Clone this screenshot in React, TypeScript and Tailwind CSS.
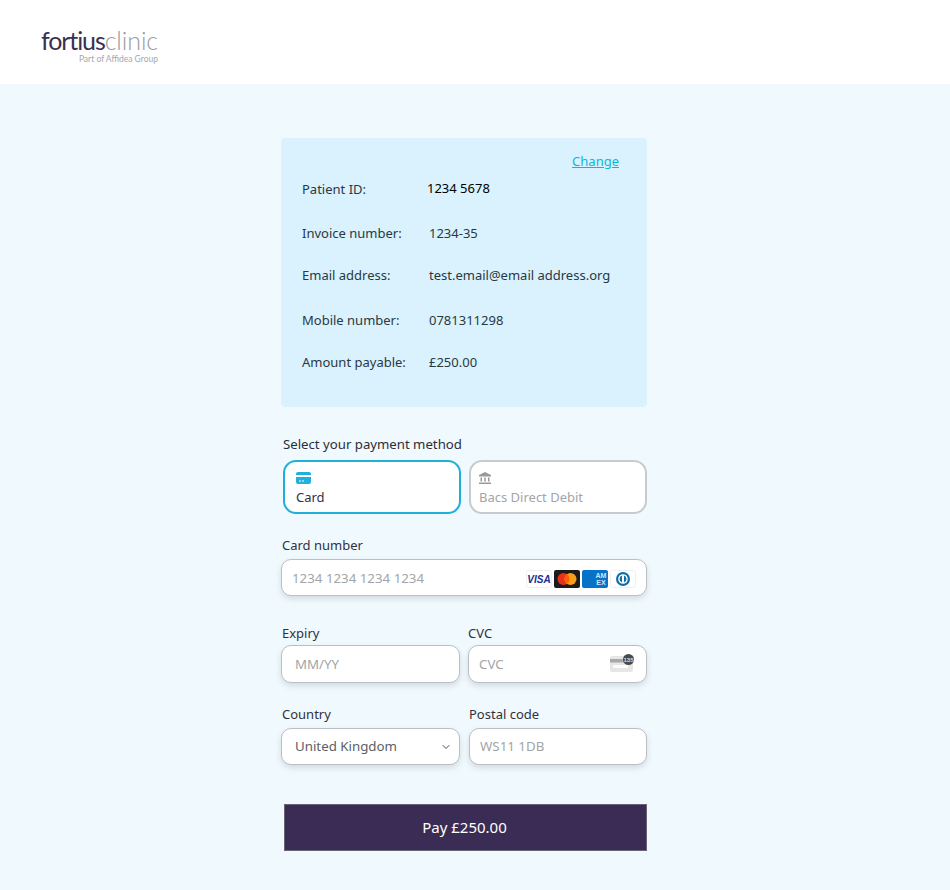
import React from 'react';
import { ChevronDown } from 'lucide-react';

const font = { fontFamily: '"Noto Sans", sans-serif' };

const rows = [
  { label: 'Patient ID:', value: '1234 5678', cls: 'h-[44px]', val: 'pl-[125px] -mt-[1px] text-black' },
  { label: 'Invoice number:', value: '1234-35', cls: 'h-[42px]', val: 'pl-[127px]' },
  { label: 'Email address:', value: 'test.email@email address.org', cls: 'h-[45px]', val: 'pl-[127px]' },
  { label: 'Mobile number:', value: '0781311298', cls: 'h-[42px]', val: 'pl-[127px]' },
  { label: 'Amount payable:', value: '£250.00', cls: 'h-[44px]', val: 'pl-[127px]' },
];

function CardIcon() {
  return (
    <svg width="15" height="12" viewBox="0 0 15 12">
      <path d="M2 0h11a2 2 0 0 1 2 2v1H0V2a2 2 0 0 1 2-2z" fill="#1fb0e0" />
      <path d="M0 5h15v5a2 2 0 0 1-2 2H2a2 2 0 0 1-2-2z" fill="#1fb0e0" />
      <path d="M3 9h2M6 9h2" stroke="#fff" strokeWidth="1" />
    </svg>
  );
}

function BankIcon() {
  return (
    <svg width="12" height="12" viewBox="0 0 12 12" fill="#9a9a9a">
      <path d="M6 0l6 3v1.500H0V3z" />
      <path d="M1.500 5.500h1.500v4H1.500zM5.250 5.500h1.500v4h-1.500zM9 5.500h1.500v4H9zM0 10.500h12V12H0z" />
    </svg>
  );
}

function Brands() {
  return (
    <div className="flex items-center gap-[2px]">
      <svg width="26" height="18" viewBox="0 0 26 18">
        <rect x="0.500" y="0.500" width="25" height="17" rx="2" fill="#fff" stroke="#eceff3" />
        <text x="13" y="12.700" textAnchor="middle" fontSize="10" fontWeight="700" fontStyle="italic" fill="#1a2f8f" fontFamily="Liberation Sans, sans-serif">VISA</text>
      </svg>
      <svg width="26" height="18" viewBox="0 0 26 18">
        <rect width="26" height="18" rx="2" fill="#1e1a1a" />
        <circle cx="9.500" cy="9" r="6" fill="#e8301c" />
        <circle cx="16.500" cy="9" r="6" fill="#f79e1b" />
        <path d="M13 4.100a6 6 0 0 1 0 9.800 6 6 0 0 1 0-9.800z" fill="#ff5f00" />
      </svg>
      <svg width="26" height="18" viewBox="0 0 26 18">
        <rect width="26" height="18" rx="2" fill="#0672c8" />
        <text x="19" y="8" textAnchor="middle" fontSize="7" fontWeight="700" fill="#cfe6f8" fontFamily="Liberation Sans, sans-serif">AM</text>
        <text x="19" y="15" textAnchor="middle" fontSize="7" fontWeight="700" fill="#cfe6f8" fontFamily="Liberation Sans, sans-serif">EX</text>
      </svg>
      <svg width="26" height="18" viewBox="0 0 26 18">
        <rect x="0.500" y="0.500" width="25" height="17" rx="2" fill="#fff" stroke="#eceff3" />
        <circle cx="13" cy="9" r="7" fill="#0e6ea8" />
        <circle cx="13" cy="9" r="4.800" fill="#fff" />
        <path d="M12 5.500v7a3.700 3.700 0 0 1 0-7zM14 5.500a3.700 3.700 0 0 1 0 7z" fill="#0e6ea8" />
      </svg>
    </div>
  );
}

function CvcIcon() {
  return (
    <svg width="25" height="18" viewBox="0 0 25 18" className="-mt-[4px]">
      <rect y="2" width="23" height="16" rx="2" fill="#e6e6e6" />
      <rect y="5" width="23" height="3.500" fill="#a8a8a8" />
      <rect x="3" y="11" width="15" height="3" fill="#fbfbfb" />
      <circle cx="18.500" cy="5.500" r="5.500" fill="#4a4a4a" />
      <text x="18.500" y="7.800" textAnchor="middle" fontSize="6" fontWeight="700" fill="#ddd" fontFamily="Liberation Sans, sans-serif">135</text>
    </svg>
  );
}

function Field({ label, placeholder, width, children, pad = 'pl-[13px]', labelPad = '', gap = 'mb-[4px]', height = 'h-[37px]', right = 'pr-[10px]' }: { label: string; placeholder?: string; width: string; children?: React.ReactNode; pad?: string; labelPad?: string; gap?: string; height?: string; right?: string }) {
  return (
    <div className={width}>
      <div className={`text-[13px] leading-[20px] text-[#30313d] ${gap} ${labelPad}`}>{label}</div>
      <div className={`flex items-center justify-between bg-white rounded-[10px] border border-[#b9bfc4] shadow-[0_3px_6px_rgba(0,0,0,0.12)] text-[13.300px] text-[#a3a5a8] ${height} ${right} ${pad}`}>
        {placeholder && <span>{placeholder}</span>}
        {children}
      </div>
    </div>
  );
}

export default function App() {
  return (
    <div className="min-h-[890px] bg-[#f0f9fe]" style={font}>
      <header className="h-[84px] bg-white pl-[41px] pt-[25px]">
        <div className="w-[117px]" style={{ fontFamily: 'Lato, sans-serif' }}>
          <div className="text-[25px] leading-[30px] whitespace-nowrap text-[#3a3150]">
            <span className="tracking-[-1.1px]">fortius</span>
            <span className="font-light tracking-[-0.1px] text-[#9b9ba3]">clinic</span>
          </div>
          <div className="text-[8.500px] leading-[8px] whitespace-nowrap text-right text-[#a7a7ad]">Part of Affidea Group</div>
        </div>
      </header>

      <main className="w-[366px] ml-[281px] pt-[54px]">
        <section className="h-[269px] bg-[#d9f2fe] rounded-[4px] px-[21px] pt-[13px] text-[13px] text-[#2a3842]">
          <div className="h-[20px] text-right pr-[7px] leading-[20px]">
            <a href="#" className="underline text-[#0cb7d8]">Change</a>
          </div>
          <div className="mt-[8px]">
            {rows.map((r) => (
              <div key={r.label} className={`flex items-start leading-[20px] ${r.cls}`}>
                <span className="w-0 whitespace-nowrap">{r.label}</span>
                <span className={`whitespace-nowrap ${r.val}`}>{r.value}</span>
              </div>
            ))}
          </div>
        </section>

        <div className="mt-[27px] pl-[2px] text-[13.200px] leading-[20px] text-[#2a2e36]">Select your payment method</div>

        <div className="mt-[6px] ml-[2px] flex gap-[8px]">
          <div className="w-[178px] h-[54px] rounded-[13px] border-2 border-[#1fb0da] bg-white pl-[11px] pt-[10px]">
            <CardIcon />
            <div className="text-[13px] leading-[20px] mt-[3px] text-[#30313d]">Card</div>
          </div>
          <div className="w-[178px] h-[54px] rounded-[13px] border-2 border-[#c8cbce] bg-white pl-[8px] pt-[10px]">
            <BankIcon />
            <div className="text-[13px] leading-[20px] mt-[3px] text-[#a3a5a8]">Bacs Direct Debit</div>
          </div>
        </div>

        <div className="mt-[21px]">
          <Field label="Card number" placeholder="1234 1234 1234 1234" width="w-full" pad="pl-[10px] pt-[2px]" labelPad="pl-[1px]">
            <Brands />
          </Field>
        </div>

        <div className="mt-[27px] flex gap-[8px]">
          <Field label="Expiry" placeholder="MM/YY" width="w-[179px]" pad="pl-[13px] pt-[2px]" labelPad="pl-[1px]" gap="mb-[2px]" height="h-[38px]" />
          <Field label="CVC" placeholder="CVC" width="w-[179px]" pad="pl-[10px] pt-[2px]" gap="mb-[2px]" height="h-[38px]" right="pr-[11px]">
            <CvcIcon />
          </Field>
        </div>

        <div className="mt-[21px] flex gap-[9px]">
          <Field label="Country" width="w-[179px]" labelPad="pl-[1px]" right="pr-[7px]">
            <span className="text-[#5c6066]">United Kingdom</span>
            <ChevronDown size={12} className="text-[#4a4e54]" />
          </Field>
          <Field label="Postal code" placeholder="WS11 1DB" width="w-[178px]" pad="pl-[10px]" />
        </div>

        <button className="mt-[39px] ml-[3px] w-[363px] h-[47px] bg-[#3b2c55] border border-[#6a6478] text-white text-[15px] pr-[2px]">Pay £250.00</button>
      </main>
    </div>
  );
}
